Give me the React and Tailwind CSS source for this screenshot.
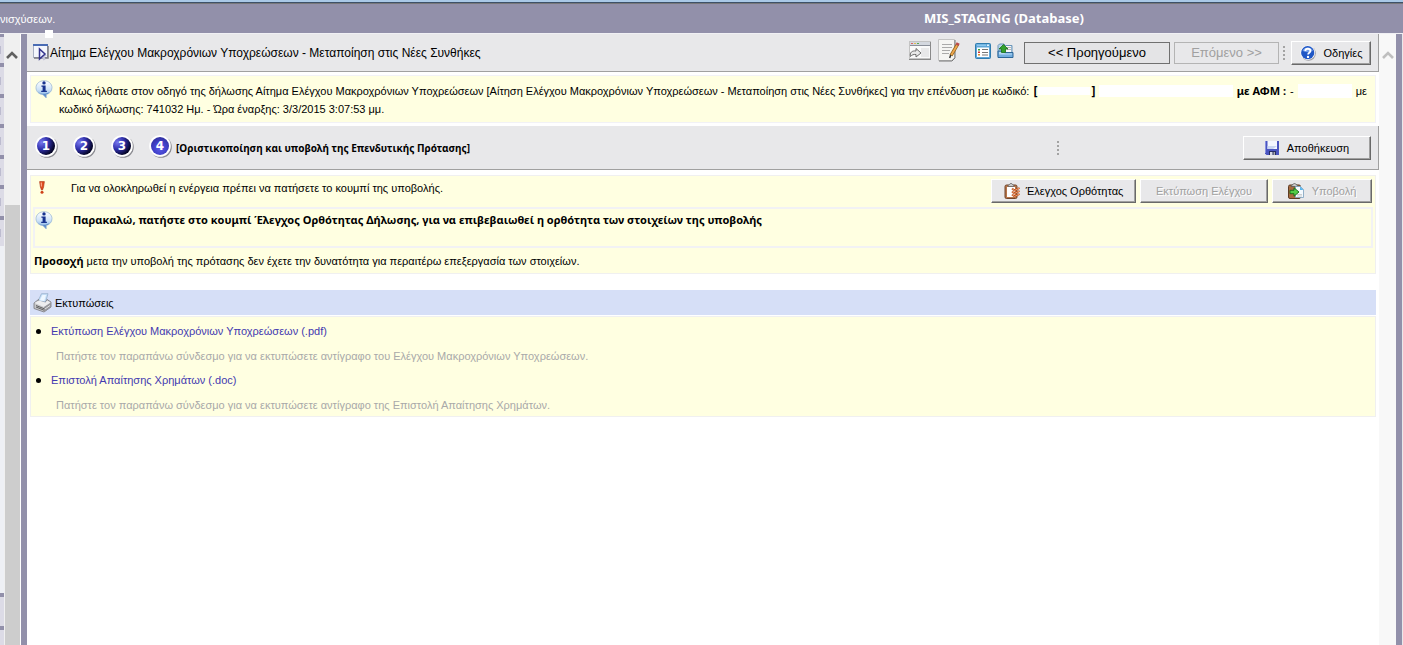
const LINKS = [
  {
    title: 'Εκτύπωση Ελέγχου Μακροχρόνιων Υποχρεώσεων (.pdf)',
    hint: 'Πατήστε τον παραπάνω σύνδεσμο για να εκτυπώσετε αντίγραφο του Ελέγχου Μακροχρόνιων Υποχρεώσεων.',
  },
  {
    title: 'Επιστολή Απαίτησης Χρημάτων (.doc)',
    hint: 'Πατήστε τον παραπάνω σύνδεσμο για να εκτυπώσετε αντίγραφο της Επιστολή Απαίτησης Χρημάτων.',
  },
]

const STEPS = [1, 2, 3, 4]

function WizardIcon() {
  return (
    <svg width="17" height="17" viewBox="0 0 17 17" className="shrink-0">
      <rect x="0.5" y="1.5" width="14" height="12" fill="#f4f6fc" stroke="#a9b0c4" />
      <path d="M0 0h15v2H0z" fill="#4a6cb4" />
      <path d="M15 2v12H1" fill="none" stroke="#77777f" strokeWidth="1.500" />
      <path d="M6.500 4.500v11l2.500-2 1.500 3 2-1-1-3 2.500-.5z" fill="#c4c4da" />
      <path d="M6.500 5v10l5.500-5z" fill="#eef0ff" stroke="#34348c" strokeWidth="1.500" />
    </svg>
  )
}

function InfoIcon() {
  return (
    <svg width="18" height="19" viewBox="0 0 18 19" className="shrink-0">
      <defs>
        <linearGradient id="bubble" x1="0" y1="0" x2="0" y2="1">
          <stop offset="0" stopColor="#ffffff" />
          <stop offset="0.500" stopColor="#cfe3f8" />
          <stop offset="1" stopColor="#6fa4de" />
        </linearGradient>
      </defs>
      <path d="M9 .7c4.600 0 8 3.100 8 7 0 3.400-2.500 6-5.600 6.700L11.200 18l-3.400-3.400C3.900 14.200 1 11.400 1 7.700c0-3.900 3.400-7 8-7z" fill="url(#bubble)" stroke="#9db9d6" strokeWidth="0.800" />
      <path d="M3 11.500c2 2.700 8 3.200 11.500.5-1 2-3 2.300-3.700 2.600l.2 2.700-2.800-2.900C5.500 14 3.800 13 3 11.500z" fill="#5e8cc8" />
      <circle cx="9" cy="2.900" r="1.700" fill="#17338f" />
      <path d="M6.400 5.500h4.200v5.200h1.300v1.300H6.200v-1.300h1.400V6.700H6.400z" fill="#17338f" />
    </svg>
  )
}

function WindowArrowIcon() {
  return (
    <svg width="22" height="19" viewBox="0 0 22 19">
      <rect x="0.500" y="0.500" width="21" height="17" fill="#fafafa" stroke="#c4c4c4" />
      <path d="M1 1h20v3H1z" fill="#d4d8df" />
      <path d="M2 2h2v1H2z" fill="#d66" />
      <path d="M5 2h2v1H5z" fill="#db5" />
      <path d="M8 2h2v1H8z" fill="#5a5" />
      <path d="M1 4.500h20" stroke="#8a8f99" />
      <path d="M0 18.500h22M21.500 1v17" stroke="#8a8a8a" />
      <path d="M12 7h8v9h-8z" fill="#e9e9ea" />
      <path d="M1.500 15.500c-1-4 1.500-6 5.500-5.500V7.500l5 4.500-5 4v-2.500c-2.500-.3-4 .3-5.500 2z" fill="#e9e9e9" stroke="#6c6c6c" />
    </svg>
  )
}

function NoteIcon() {
  return (
    <svg width="22" height="23" viewBox="0 0 22 23">
      <path d="M.5.5h16v18l-3 3H.5z" fill="#f5f5f3" stroke="#c4c4c4" />
      <path d="M1 22h13l3-3V1" fill="none" stroke="#777" />
      <path d="M4 5.500h10M4 8.500h10M4 11.500h8M4 14.500h7" stroke="#aaa" />
      <path d="M19.500 5.500l-6.500 11" stroke="#8e6117" strokeWidth="3.400" />
      <path d="M19.300 6l-6 10" stroke="#f0a850" strokeWidth="1.800" />
      <path d="M20.200 4l-1.200 2.200" stroke="#bb4b4b" strokeWidth="3.400" />
      <path d="M12.700 16l-1 3" stroke="#333" strokeWidth="1.500" />
    </svg>
  )
}

function ListWindowIcon() {
  return (
    <svg width="16" height="16" viewBox="0 0 16 16">
      <rect x="0.500" y="0.500" width="15" height="15" rx="1" fill="#5fa6d8" stroke="#317caf" />
      <path d="M2 1.500h9V3H2z" fill="#8cc7ee" />
      <path d="M12 1.500h2V3h-2z" fill="#e4f3fd" />
      <path d="M2 4.500h12V14H2z" fill="#fff" />
      <path d="M3 6h2v1.500H3z" fill="#3b9e3b" />
      <path d="M3 8.500h2V10H3z" fill="#c33" />
      <path d="M3 11h2v1.500H3z" fill="#dc8b28" />
      <path d="M7 6.500h6M7 9.500h6M7 12h6" stroke="#777" />
    </svg>
  )
}

function UploadFolderIcon() {
  return (
    <svg width="17" height="16" viewBox="0 0 17 16">
      <path d="M1 2.500L2.500 1H7l1.500 1.500H15v11H1z" fill="#b8d4ea" stroke="#6b95b9" />
      <path d="M4 3h10v6H4z" fill="#f8f8f8" />
      <path d="M10 4.500h4M10 6.500h4" stroke="#b5b5b5" />
      <path d="M1 8h6l1.500 1.500H16V14.500H1z" fill="#74aee0" stroke="#2e6798" />
      <path d="M2 9h4.500L8 10.500h7v1H2z" fill="#b5d9f4" />
      <path d="M6.500 1.500L11 6H8.500v3.500h-4V6H2z" fill="#34a02c" stroke="#176d16" strokeWidth="0.800" />
    </svg>
  )
}

function HelpIcon() {
  return (
    <svg width="16" height="16" viewBox="0 0 16 16">
      <circle cx="8.500" cy="8.500" r="7.300" fill="#9f9fa4" />
      <circle cx="7.700" cy="7.700" r="7.300" fill="#fff" />
      <circle cx="7.700" cy="7.700" r="6.600" fill="#2057c5" />
      <path d="M2.500 5.500a6 6 0 0 1 10.400 0c-2 2-8 2.500-10.400 0z" fill="#739eea" />
      <path d="M5.300 6c.1-3 5.200-3 5.100 0 0 1.800-2.300 1.700-2.300 3.500" fill="none" stroke="#fff" strokeWidth="1.800" />
      <circle cx="8" cy="11.900" r="1.200" fill="#fff" />
    </svg>
  )
}

function DiskIcon() {
  return (
    <svg width="14" height="14" viewBox="0 0 14 14">
      <path d="M0 0h14v14H1.500L0 12.500z" fill="#4a55c0" />
      <path d="M0 0h1v12H0z" fill="#8790e0" />
      <path d="M2.500 0h9.500v8H2.500z" fill="#f4f7ff" />
      <path d="M2.500 5h9.500l-4 3H2.500z" fill="#c9d6f2" />
      <path d="M4 10h7v4H4z" fill="#252c62" />
      <path d="M5 11h2.500v3H5z" fill="#d8dae6" />
      <path d="M8.500 11H10v3H8.500z" fill="#aaa" />
    </svg>
  )
}

function CheckClipboardIcon() {
  return (
    <svg width="16" height="16" viewBox="0 0 16 16">
      <rect x="1" y="2" width="12" height="13.500" rx="1.500" fill="#b7764a" stroke="#70452b" />
      <path d="M3 4h8v8.500l-1.500 1.500H3z" fill="#fff" />
      <path d="M4 3.500C4 2 5 2 5.500 1.500 6 0 8 0 8.500 1.500 9 2 10 2 10 3.500z" fill="#c9c9c9" stroke="#666" strokeWidth="0.800" />
      <path d="M8 5.500l2.500 2L15.500 5M8 8.500l2.500 2L15.500 8M8 11.500l2.500 2 5-2.500" fill="none" stroke="#b04a18" strokeWidth="1.900" />
      <path d="M8 5.500l2.500 2L15.500 5M8 8.500l2.500 2L15.500 8M8 11.500l2.500 2 5-2.500" fill="none" stroke="#f8a070" strokeWidth="0.900" />
    </svg>
  )
}

function SubmitIcon() {
  return (
    <svg width="16" height="16" viewBox="0 0 16 16">
      <rect x="0.500" y="2" width="12" height="13.500" rx="1.500" fill="#a86b40" stroke="#5f3c24" />
      <path d="M3 3.500C3 2 4.500 2 5 1.500 5.500 0 7.500 0 8 1.500 8.500 2 10 2 10 3.500z" fill="#c9c9c9" stroke="#555" strokeWidth="0.800" />
      <path d="M7.500 3.500h5l3 3v8h-8z" fill="#f4faff" stroke="#7b9fbd" strokeWidth="0.800" />
      <path d="M12 3.500l3.500 3.500H12z" fill="#58b5ee" />
      <path d="M9 11.500h5M9 13h5" stroke="#bbb" strokeWidth="0.700" />
      <path d="M2 7.300h4V4.800l5 4.200-5 4.200v-2.500H2z" fill="#52cc47" stroke="#146b16" strokeWidth="0.900" />
    </svg>
  )
}

function PrinterIcon() {
  return (
    <svg width="19" height="20" viewBox="0 0 19 20" className="shrink-0">
      <path d="M5 8L8.500.7h6.500L12.500 9z" fill="#c9e2fa" stroke="#8fa9c4" strokeWidth="0.700" />
      <path d="M7 7l2.500-5H13l-1.800 6z" fill="#eef7ff" />
      <path d="M1 10l4.500-3.500L6 8.500l6.500 1L14 6.500l4 2.500v5l-7 5L1 15.500z" fill="#c6c6c9" stroke="#77777c" strokeWidth="0.800" />
      <path d="M1.500 10L6 7.500l6.500 2L14 7.500l3.500 2-6.500 4.500z" fill="#ededef" />
      <path d="M3 12.500l8 3.200M3 14l8 3.200" stroke="#555" strokeWidth="0.900" />
      <path d="M11 14v5l7-5V9.500z" fill="#96969b" />
      <path d="M12 16l5-3.500" stroke="#e4e4e4" />
    </svg>
  )
}

function AlertIcon() {
  return (
    <svg width="6" height="13" viewBox="0 0 6 13" className="mt-0.5 shrink-0">
      <path d="M.6.600h4.800L4.600 6 3.500 9h-1L1.400 6z" fill="#e04c20" stroke="#a62f10" strokeWidth="0.600" />
      <path d="M1.500 1.500h1.500v4H2z" fill="#f7a183" />
      <circle cx="3" cy="11.300" r="1.500" fill="#cf4119" />
    </svg>
  )
}

function StepBall({ n, current }) {
  return (
    <button className="relative flex size-[23px] items-center justify-center" aria-label={`Βήμα ${n}`}>
      <svg width="23" height="23" viewBox="0 0 23 23" className="absolute inset-0">
        <defs>
          <radialGradient id={`ball${n}`} cx={current ? '0.500' : '0.250'} cy={current ? '0.650' : '0.300'} r="0.750">
            <stop offset="0" stopColor={current ? '#5a5ae6' : '#7777ee'} />
            <stop offset="0.500" stopColor={current ? '#4040c8' : '#3232ae'} />
            <stop offset="1" stopColor={current ? '#2a2a90' : '#050528'} />
          </radialGradient>
        </defs>
        <circle cx="12" cy="12" r="10.800" fill="#8c8c92" />
        <circle cx="11" cy="11" r="10.800" fill="#fff" />
        <circle cx="11" cy="11" r="9" fill={`url(#ball${n})`} />
      </svg>
      <span className="relative pr-px pb-px font-['DejaVu_Sans',sans-serif] text-[12px] leading-4 font-bold text-white">{n}</span>
    </button>
  )
}

function Dots() {
  return (
    <span className="flex w-[2px] flex-col gap-[2px]">
      {[0, 1, 2, 3].map(i => <span key={i} className="size-[2px] bg-[#a3a3a3]" />)}
    </span>
  )
}

function ToolButton({ icon, children, disabled, className }) {
  return (
    <button
      disabled={disabled}
      className={`flex h-6 items-center justify-center border border-t-white border-l-white border-r-[#696969] border-b-[#696969] bg-[#e8e8ea] text-[11px] whitespace-nowrap shadow-[inset_-1px_-1px_0_#a0a0a0] disabled:text-[#a0a0a0] disabled:[text-shadow:1px_1px_0_#fff] ${className}`}
    >
      {icon}
      {children}
    </button>
  )
}

function Bold({ children, className = '' }) {
  return <b className={`font-['Noto_Sans',sans-serif] ${className}`}>{children}</b>
}

function Chevron({ color }) {
  return (
    <svg width="12" height="10" viewBox="0 0 12 10">
      <path d="M1 8l5-5 5 5" fill="none" stroke={color} strokeWidth="2.600" />
    </svg>
  )
}

// Narrow slice of the navigation menu, still visible left of its scrollbar
function MenuEdge() {
  return (
    <nav className="flex w-1 shrink-0 flex-col bg-[#9290aa]">
      <div className="mt-[3px] flex h-[209px] flex-col gap-1">
        {[0, 1, 2, 3, 4, 5, 6].map(i => (
          <div key={i} className="flex flex-1 items-center bg-[#dcdbe6]">
            <span className="h-2 w-px bg-[#bdbccf]" />
          </div>
        ))}
      </div>
      <div className="flex-1 bg-[#eef0f5]" />
      <div className="mt-1 h-[29px] bg-[#dcdbe6]" />
      <div className="mt-1 h-[15px] bg-[#dcdbe6]" />
    </nav>
  )
}

export default function App() {
  return (
    <div className="flex min-h-screen flex-col bg-white font-['Liberation_Sans',sans-serif] text-[11px] leading-[18px] text-black">
      <header className="relative flex h-[33px] shrink-0 items-center border-t-2 border-[#a9c8e6] bg-[#9290aa] text-white shadow-[inset_0_1px_0_#3d5068,inset_0_2px_0_#77777a]">
        <span className="w-[924px] shrink-0 pt-0.5">νισχύσεων.</span>
        <Bold className="text-[13px]">MIS_STAGING (Database)</Bold>
        <span className="absolute -bottom-[5px] left-[45px] size-2 bg-white" />
      </header>

      <div className="flex flex-1 border-t border-[#f0f0f4]">
        <MenuEdge />
        <div className="flex w-[17px] shrink-0 flex-col items-center border-r border-white bg-[#f0f0f0] pt-4">
          <Chevron color="#606060" />
          <div className="mt-[145px] w-[15px] flex-1 bg-[#cdcdcd]" />
        </div>
        <div className="w-1.5 shrink-0 bg-[#9290aa]" />

        <main className="min-w-0 flex-1">
          <div className="flex h-[38px] items-center border-r border-b border-[#a0a0a0] bg-[#e8e8ea] pr-[7px] pl-1.5">
            <WizardIcon />
            <h1 className="flex-1 text-[12px] whitespace-nowrap">
              Αίτημα Ελέγχου Μακροχρόνιων Υποχρεώσεων - Μεταποίηση στις Νέες Συνθήκες
            </h1>
            <div className="mr-2.5 flex items-center gap-[7px] pb-1">
              <button aria-label="Μετάβαση"><WindowArrowIcon /></button>
              <button aria-label="Σημειώσεις"><NoteIcon /></button>
              <button aria-label="Λίστα" className="ml-2"><ListWindowIcon /></button>
              <button aria-label="Μεταφόρτωση" className="-ml-px"><UploadFolderIcon /></button>
            </div>
            <div className="flex items-center gap-1 text-[13px]">
              <button className="h-[22px] w-[146px] border border-[#707070] bg-[#e4e4e6]">&lt;&lt; Προηγούμενο</button>
              <button disabled className="h-[22px] w-[105px] border border-[#b4b4b4] bg-[#e8e8ea] text-[#a0a0a0]">Επόμενο &gt;&gt;</button>
              <Dots />
            </div>
            <ToolButton icon={<HelpIcon />} className="ml-1.5 w-20 gap-2">Οδηγίες</ToolButton>
          </div>

          <section className="mt-[3px] mr-[3px] ml-[3px] flex h-12 border border-[#f2f2f6] bg-[#ffffe1] pt-1 pl-1">
            <InfoIcon />
            <div className="ml-1.5 min-w-0 flex-1 pt-0.5">
              <div className="flex items-center whitespace-nowrap">
                <span>
                  Καλως ήλθατε στον οδηγό της δήλωσης Αίτημα Ελέγχου Μακροχρόνιων Υποχρεώσεων [Αίτηση Ελέγχου Μακροχρόνιων Υποχρεώσεων - Μεταποίηση στις Νέες Συνθήκες] για την επένδυση με κωδικό:
                </span>
                <Bold className="ml-1 text-[12px]">[</Bold>
                <span className="mx-px h-2 w-[52px] bg-white" />
                <Bold className="text-[12px]">]</Bold>
                <span className="mx-1 h-3 flex-1 bg-white" />
                <Bold>με ΑΦΜ : </Bold>
                <span className="ml-1">-</span>
                <span className="mr-1 ml-1 h-3.5 w-[54px] bg-white" />
                <span className="mr-2">με</span>
              </div>
              <p>κωδικό δήλωσης: 741032 Ημ. - Ώρα έναρξης: 3/3/2015 3:07:53 μμ.</p>
            </div>
          </section>

          <div className="mt-[3px] flex h-11 items-center border-r border-b border-[#a0a0a0] bg-[#e8e8ea] pr-[7px] pl-2">
            <div className="flex gap-[15px] pb-0.5">
              {STEPS.map(n => <StepBall key={n} n={n} current={n === 4} />)}
            </div>
            <Bold className="ml-1 flex-1 text-[10px]">[Οριστικοποίηση και υποβολή της Επενδυτικής Πρότασης]</Bold>
            <Dots />
            <ToolButton icon={<DiskIcon />} className="ml-[184px] w-32 gap-2">Αποθήκευση</ToolButton>
          </div>

          <section className="mt-[5px] mr-[3px] ml-[3px] border border-[#f0f0f0] bg-[#ffffe1]">
            <div className="flex h-[31px] items-start pt-[3px] pr-[3px] pl-2">
              <AlertIcon />
              <p className="ml-[26px] flex-1">Για να ολοκληρωθεί η ενέργεια πρέπει να πατήσετε το κουμπί της υποβολής.</p>
              <div className="flex gap-1">
                <ToolButton icon={<CheckClipboardIcon />} className="w-[145px] gap-1.5">Έλεγχος Ορθότητας</ToolButton>
                <ToolButton disabled className="w-32">Εκτύπωση Ελέγχου</ToolButton>
                <ToolButton disabled icon={<SubmitIcon />} className="w-[100px] gap-2">Υποβολή</ToolButton>
              </div>
            </div>
            <div className="mx-0.5 flex h-[41px] border-2 border-[#f2f2f4] pt-0.5">
              <InfoIcon />
              <Bold className="ml-5">Παρακαλώ, πατήστε στο κουμπί Έλεγχος Ορθότητας Δήλωσης, για να επιβεβαιωθεί η ορθότητα των στοιχείων της υποβολής</Bold>
            </div>
            <p className="h-[25px] pt-1 pl-[3px]">
              <Bold>Προσοχή</Bold> μετα την υποβολή της πρότασης δεν έχετε την δυνατότητα για περαιτέρω επεξεργασία των στοιχείων.
            </p>
          </section>

          <section className="mt-4 mr-[3px] ml-[3px]">
            <h2 className="flex h-[25px] items-center gap-[3px] bg-[#d6dff7] pl-[3px]">
              <PrinterIcon />
              Εκτυπώσεις
            </h2>
            <ul className="mt-px flex flex-col gap-1.5 border border-[#f0f0f0] bg-[#ffffe1] pt-[5px] pb-0.5 pl-1">
              {LINKS.map(link => (
                <li key={link.title}>
                  <div className="flex items-center">
                    <span className="ml-px size-[5px] rounded-full bg-black" />
                    <a href="#" className="ml-2.5 text-[#4339b0]">{link.title}</a>
                  </div>
                  <p className="mt-[7px] pl-[21px] text-[#a9a9a9]">{link.hint}</p>
                </li>
              ))}
            </ul>
          </section>
        </main>

        <div className="flex w-[17px] shrink-0 justify-center bg-[#f8f8f8] pt-4">
          <Chevron color="#bfbfbf" />
        </div>
        <div className="w-[7px] shrink-0 border-r border-[#e8e8ea] bg-[#9290aa]" />
      </div>
    </div>
  )
}
